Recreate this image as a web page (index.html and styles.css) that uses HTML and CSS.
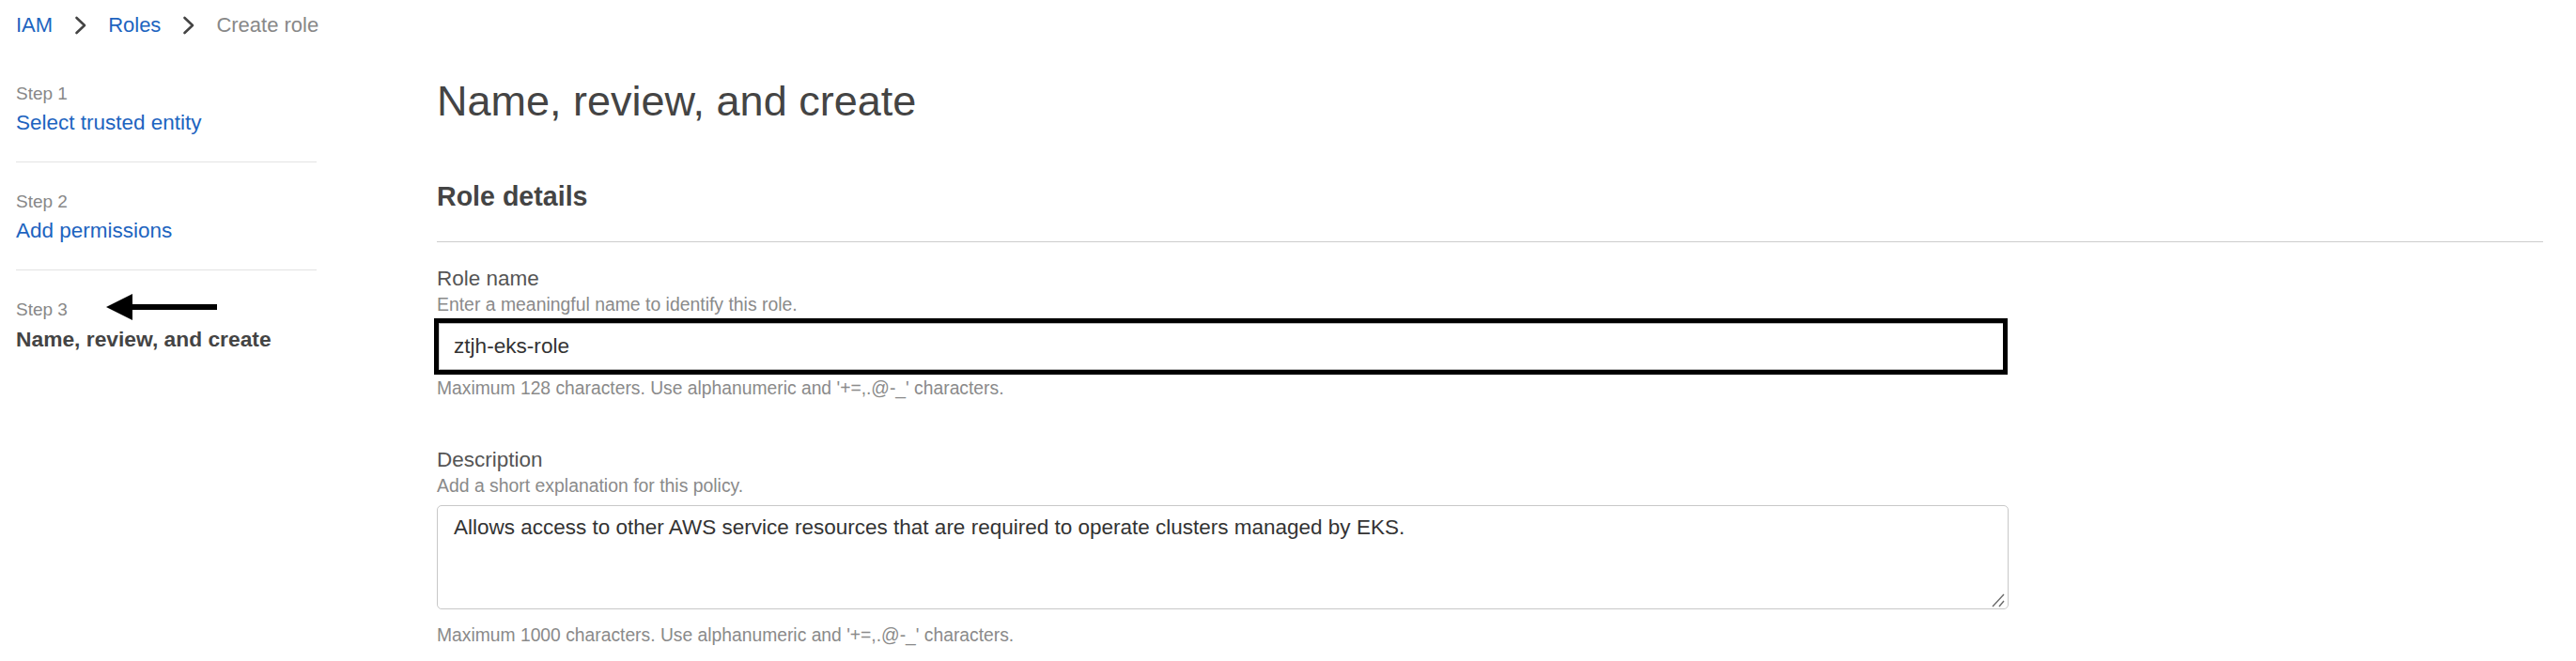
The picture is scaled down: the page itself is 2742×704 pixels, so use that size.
FILE: index.html
```html
<!DOCTYPE html>
<html lang="en">
<head>
<meta charset="utf-8">
<title>Create role</title>
<link rel="stylesheet" href="styles.css">
</head>
<body>
<nav class="breadcrumb">
  <a class="crumb-link" href="#">IAM</a>
  <svg class="chev" width="14" height="20" viewBox="0 0 14 20"><path d="M2.5 2 L11 10 L2.5 18" fill="none" stroke="#444" stroke-width="2.6" stroke-linecap="round" stroke-linejoin="round"/></svg>
  <a class="crumb-link" href="#">Roles</a>
  <svg class="chev" width="14" height="20" viewBox="0 0 14 20"><path d="M2.5 2 L11 10 L2.5 18" fill="none" stroke="#444" stroke-width="2.6" stroke-linecap="round" stroke-linejoin="round"/></svg>
  <span class="crumb-current">Create role</span>
</nav>
<div class="layout">
  <aside class="sidebar">
    <div class="step step-divided">
      <div class="step-label">Step 1</div>
      <a class="step-title" href="#">Select trusted entity</a>
    </div>
    <div class="step step-divided">
      <div class="step-label">Step 2</div>
      <a class="step-title" href="#">Add permissions</a>
    </div>
    <div class="step">
      <div class="step-label step-label-marked">Step 3
        <svg class="pointer" width="120" height="30" viewBox="0 0 120 30"><polygon points="0,15 28,1 28,29" fill="#000"/><rect x="22" y="12" width="96" height="6" fill="#000"/></svg>
      </div>
      <div class="step-title step-current">Name, review, and create</div>
    </div>
  </aside>
  <main class="main">
    <h1 class="page-title">Name, review, and create</h1>
    <h2 class="section-title">Role details</h2>
    <div class="field">
      <div class="field-label">Role name</div>
      <div class="field-hint">Enter a meaningful name to identify this role.</div>
      <div class="highlight">
        <div class="text-input">ztjh-eks-role</div>
      </div>
      <div class="field-constraint">Maximum 128 characters. Use alphanumeric and '+=,.@-_' characters.</div>
    </div>
    <div class="field field-spaced">
      <div class="field-label">Description</div>
      <div class="field-hint">Add a short explanation for this policy.</div>
      <div class="text-area">Allows access to other AWS service resources that are required to operate clusters managed by EKS.
        <svg class="resize" width="16" height="16" viewBox="0 0 16 16"><path d="M2 15 L14 2 M9 15 L14 9" stroke="#6b6b6b" stroke-width="1.4" fill="none"/></svg>
      </div>
      <div class="field-constraint field-constraint-area">Maximum 1000 characters. Use alphanumeric and '+=,.@-_' characters.</div>
    </div>
  </main>
</div>
</body>
</html>
```
FILE: styles.css
```css
* { box-sizing: border-box; }

body {
  margin: 0;
  background: #ffffff;
  font-family: "Liberation Sans", Arial, Helvetica, sans-serif;
  color: #444444;
}

a { text-decoration: none; }

.breadcrumb {
  display: flex;
  align-items: center;
  padding: 12px 0 0 17px;
  height: 42px;
  font-size: 22px;
  line-height: 30px;
}

.crumb-link { color: #1d64c0; }

.chev { margin: 0 22px 0 23px; }

.crumb-current { color: #888888; }

.layout {
  display: flex;
  align-items: flex-start;
}

.sidebar {
  width: 320px;
  flex: 0 0 320px;
  margin-left: 17px;
  padding-top: 16px;
}

.step {
  display: flex;
  flex-direction: column;
  gap: 4px;
  padding: 30px 0 26px;
}

.step-divided { border-bottom: 1px solid #e3e3e3; }

.step-label {
  font-size: 19px;
  line-height: 24px;
  color: #888888;
}

.step-label-marked { position: relative; }

.pointer {
  position: absolute;
  left: 96px;
  top: -6px;
}

.step-title {
  font-size: 22.5px;
  line-height: 30px;
  color: #1d64c0;
}

.step-current {
  color: #444444;
  font-weight: bold;
  font-size: 22.8px;
}

.main {
  flex: 1;
  margin-left: 128px;
  margin-right: 35px;
  padding-top: 40px;
}

.page-title {
  margin: 0;
  font-size: 45px;
  line-height: 52px;
  font-weight: normal;
  color: #444444;
}

.section-title {
  margin: 58px 0 0;
  padding-bottom: 31px;
  border-bottom: 1px solid #cccccc;
  font-size: 28.6px;
  line-height: 34px;
  font-weight: bold;
  color: #444444;
}

.field {
  margin-top: 26px;
  max-width: 1673px;
}

.field-spaced { margin-top: 51px; }

.field-label {
  font-size: 22.5px;
  line-height: 26px;
  color: #555555;
}

.field-hint {
  margin-top: 2px;
  font-size: 19.4px;
  line-height: 24px;
  color: #8a8a8a;
}

.highlight {
  margin: 3px 1px 0 -3px;
  border: 5px solid #000000;
}

.text-input {
  height: 50px;
  border-top: 1px solid #b8b8b8;
  border-bottom: 1px solid #b8b8b8;
  border-left: 1px solid #d0d0d0;
  padding-left: 15px;
  font-size: 22.6px;
  line-height: 48px;
  color: #333333;
  white-space: nowrap;
}

.field-constraint {
  margin-top: 3px;
  font-size: 19.3px;
  line-height: 24px;
  color: #8a8a8a;
}

.field-constraint-area { margin-top: 16px; }

.text-area {
  position: relative;
  margin-top: 9px;
  height: 111px;
  border: 1px solid #c8c8c8;
  border-radius: 5px;
  padding: 8px 17px 0;
  font-size: 22.5px;
  line-height: 30px;
  color: #333333;
}

.resize {
  position: absolute;
  right: 2px;
  bottom: 1px;
}
```
